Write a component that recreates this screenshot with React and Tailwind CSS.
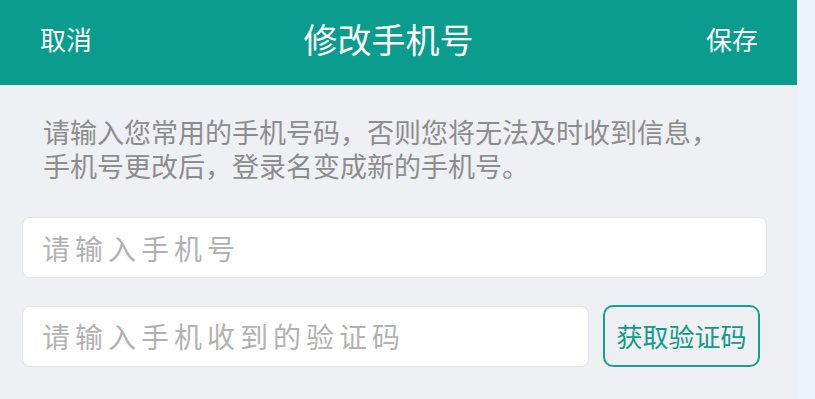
export default function App() {
  const font = { fontFamily: '"Noto Sans CJK SC", "Noto Sans", sans-serif' };

  return (
    <div
      className="flex w-[815px] h-[399px] bg-[#eef3fa] overflow-hidden"
      style={font}
    >
      <div className="w-[797px] h-full bg-[#eff0f4] flex flex-col">
        {/* Header */}
        <header className="h-[85px] shrink-0 bg-[#0a9c8d] flex items-center justify-between pl-[40px] pr-[39px] pb-[8px] text-white">
          <button className="text-[26px] leading-none">取消</button>
          <h1 className="text-[34px] leading-none font-normal mr-[21px]">
            修改手机号
          </h1>
          <button className="text-[26px] leading-none">保存</button>
        </header>

        {/* Tip */}
        <p className="mt-[30px] ml-[43px] text-[27px] leading-[34px] text-[#8d8d8d]">
          请输入您常用的手机号码，否则您将无法及时收到信息，
          <br />
          手机号更改后，登录名变成新的手机号。
        </p>

        {/* Form */}
        <div className="mt-[34px] pl-[22px] pr-[30px] flex flex-col gap-[27px]">
          <input
            type="tel"
            placeholder="请输入手机号"
            className="h-[61px] w-full bg-white rounded-[8px] border border-[#e3e4e8] px-[19px] text-[28px] tracking-[5px] text-[#333] placeholder:text-[#b2b2b2] outline-none"
          />
          <div className="flex items-center gap-[14px]">
            <input
              type="text"
              placeholder="请输入手机收到的验证码"
              className="h-[61px] w-[567px] bg-white rounded-[8px] border border-[#e3e4e8] px-[19px] text-[28px] tracking-[5px] text-[#333] placeholder:text-[#b2b2b2] outline-none"
            />
            <button className="h-[62px] w-[157px] rounded-[10px] border-2 border-[#17a08f] text-[26px] text-[#15998a] leading-none">
              获取验证码
            </button>
          </div>
        </div>
      </div>
    </div>
  );
}
